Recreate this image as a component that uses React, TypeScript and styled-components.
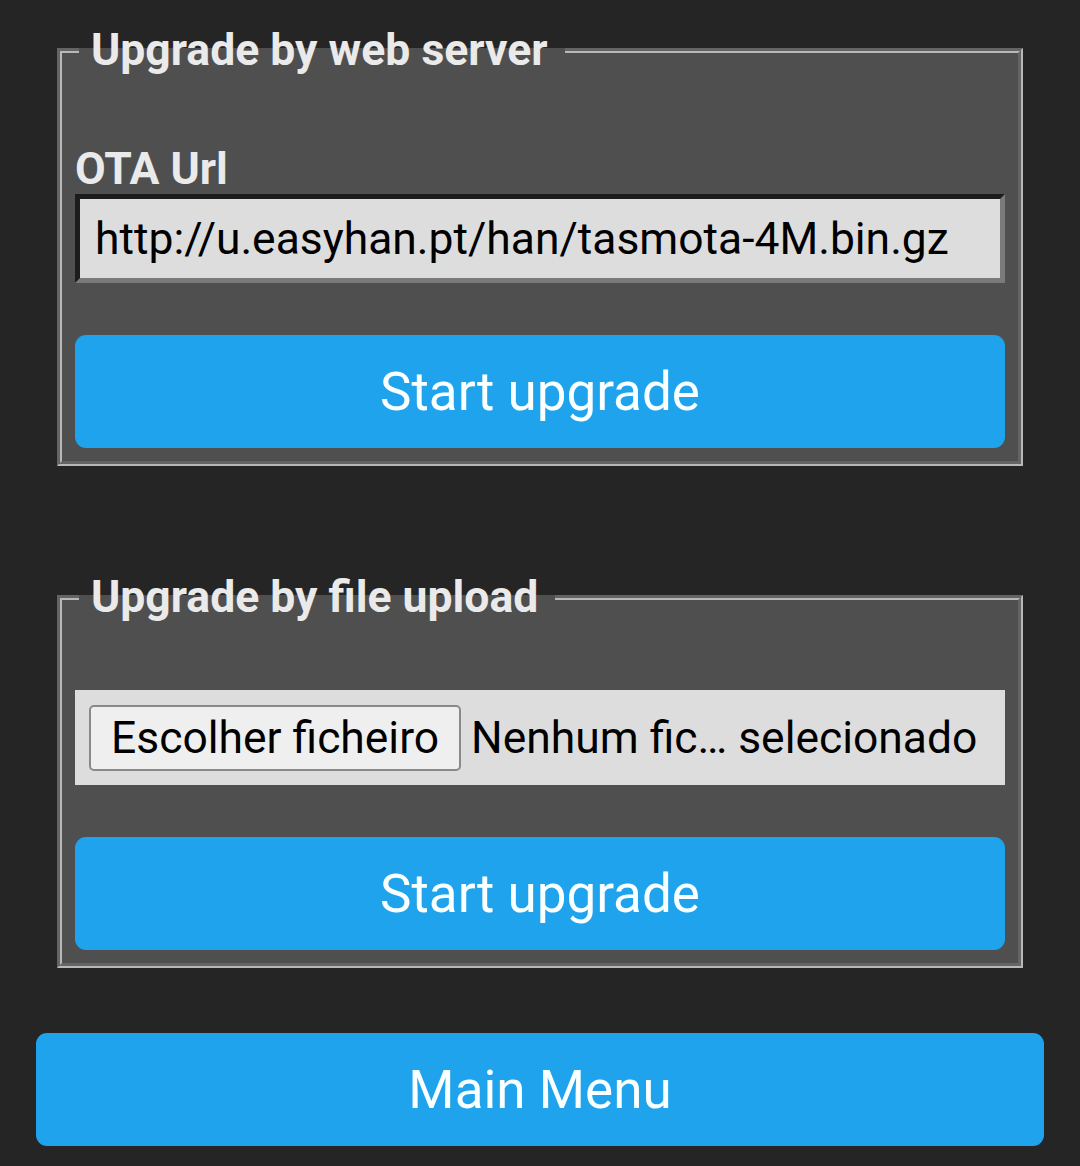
import React from "react";
import styled, { createGlobalStyle } from "styled-components";

const GlobalStyle = createGlobalStyle`
  html, body {
    margin: 0;
    padding: 0;
    background: #252525;
  }
  body {
    font-family: Roboto, "Noto Sans", "Liberation Sans", sans-serif;
    color: #eaeaea;
  }
`;

const Page = styled.div`
  box-sizing: border-box;
  width: 1080px;
  min-height: 1166px;
  padding: 0 36px;
  display: flex;
  flex-direction: column;
`;

const Group = styled.fieldset<{ $top: number }>`
  box-sizing: border-box;
  margin: ${(p) => p.$top}px 21px 0;
  padding: 0 13px 13px;
  background: #4f4f4f;
  border: 5px groove #b8b8b8;
  display: flex;
  flex-direction: column;
  min-width: 0;
`;

const Legend = styled.legend`
  padding: 0 17px 0 12px;
  margin-left: 4px;
  font-size: 44.5px;
  font-weight: 700;
  line-height: 62px;
  color: #eaeaea;
`;

const Label = styled.label`
  display: block;
  margin-top: 63px;
  font-size: 44.5px;
  font-weight: 700;
  line-height: 50px;
  color: #eaeaea;
`;

const UrlInput = styled.div`
  box-sizing: border-box;
  height: 89px;
  padding: 0 15px;
  background: #dddddd;
  color: #000;
  font-size: 44.4px;
  display: flex;
  align-items: center;
  white-space: nowrap;
  border-style: solid;
  border-width: 5px;
  border-color: #1c1c1c #7a7a7a #7a7a7a #1c1c1c;
`;

const FileRow = styled.div`
  box-sizing: border-box;
  height: 95px;
  margin-top: 62px;
  padding: 0 14px;
  background: #dddddd;
  color: #000;
  display: flex;
  align-items: center;
  gap: 10px;
  font-size: 44.4px;
  white-space: nowrap;
`;

const FileButton = styled.span`
  box-sizing: border-box;
  height: 66px;
  padding: 0 20px;
  display: inline-flex;
  align-items: center;
  background: #efefef;
  border: 2px solid #8a8a8a;
  border-radius: 5px;
  color: #000;
`;

const FileName = styled.span`
  color: #000;
`;

const Button = styled.button<{ $top: number }>`
  box-sizing: border-box;
  width: 100%;
  height: 113px;
  margin-top: ${(p) => p.$top}px;
  border: 0;
  border-radius: 11px;
  background: #1fa3ec;
  color: #faffff;
  font-family: Roboto, "Noto Sans", "Liberation Sans", sans-serif;
  font-size: 53px;
  cursor: pointer;
`;

export default function App() {
  return (
    <>
      <GlobalStyle />
      <Page>
        <Group $top={19}>
          <Legend>Upgrade by web server</Legend>
          <Label>OTA Url</Label>
          <UrlInput>http://u.easyhan.pt/han/tasmota-4M.bin.gz</UrlInput>
          <Button $top={52}>Start upgrade</Button>
        </Group>
        <Group $top={100}>
          <Legend>Upgrade by file upload</Legend>
          <FileRow>
            <FileButton>Escolher ficheiro</FileButton>
            <FileName>Nenhum fic… selecionado</FileName>
          </FileRow>
          <Button $top={52}>Start upgrade</Button>
        </Group>
        <Button $top={65}>Main Menu</Button>
      </Page>
    </>
  );
}
